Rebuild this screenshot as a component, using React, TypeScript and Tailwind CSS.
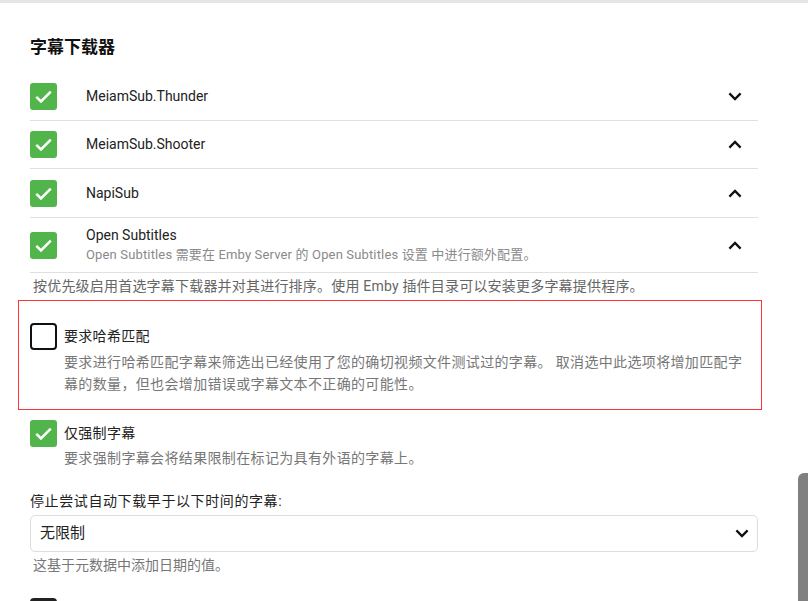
import React from 'react'

const FONT = "font-['Roboto','Noto_Sans_CJK_SC',sans-serif]"

function GreenCheck() {
  return (
    <div className="flex h-[27px] w-[27px] shrink-0 items-center justify-center rounded-[3px] bg-[#52b54b]">
      <svg width="27" height="27" viewBox="0 0 27 27">
        <path d="M6.3 13.8 L11 18.5 L20.8 8.7" fill="none" stroke="#fff" strokeWidth="2.5" />
      </svg>
    </div>
  )
}

function Chevron({ up = false }: { up?: boolean }) {
  return (
    <svg width="14" height="9" viewBox="0 0 14 9" className={up ? 'rotate-180' : ''}>
      <path d="M1.4 1.4 L7 7 L12.6 1.4" fill="none" stroke="#111" strokeWidth="2.3" />
    </svg>
  )
}

const downloaders = [
  { name: 'MeiamSub.Thunder', up: false },
  { name: 'MeiamSub.Shooter', up: true },
  { name: 'NapiSub', up: true },
]

export default function App() {
  return (
    <div className={`relative h-[601px] w-[808px] overflow-hidden bg-white text-[#222] ${FONT}`}>
      <div className="h-[3px] bg-[#e5e5e5]" />

      <div className="pl-[30px] pr-[50px]">
        <h2 className="mt-[32px] text-[17px] font-bold leading-[24px] text-[#111]">字幕下载器</h2>

        {/* Downloader list */}
        <div className="mt-[14px]">
          {downloaders.map((d, i) => (
            <div
              key={d.name}
              className={`flex items-center border-b border-[#e0e0e0] ${i === 2 ? 'h-[49px]' : 'h-[48px]'}`}
            >
              <GreenCheck />
              <div className="ml-[29px] flex-1 text-[14px]">{d.name}</div>
              <div className="mr-[16px] flex w-[14px] justify-center">
                <Chevron up={d.up} />
              </div>
            </div>
          ))}
          <div className="flex h-[55px] items-center border-b border-[#e0e0e0]">
            <GreenCheck />
            <div className="ml-[29px] flex-1">
              <div className="text-[14px] leading-[20px]">Open Subtitles</div>
              <div className="text-[13px] leading-[20px] tracking-[0.15px] text-[#8a8a8a]">
                Open Subtitles 需要在 Emby Server 的 Open Subtitles 设置 中进行额外配置。
              </div>
            </div>
            <div className="mr-[16px] flex w-[14px] justify-center">
              <Chevron up />
            </div>
          </div>
        </div>

        <div className="ml-[3px] mt-[3px] text-[14px] leading-[20px] tracking-[0.2px] text-[#666]">
          按优先级启用首选字幕下载器并对其进行排序。使用 Emby 插件目录可以安装更多字幕提供程序。
        </div>

        {/* Hash match option (highlighted) */}
        <div className="ml-[-12px] mr-[-4px] mt-[4px] border border-[#f33] pb-[14px] pl-[11px] pr-[13px] pt-[22px]">
          <div className="flex h-[27px] items-center">
            <div className="h-[27px] w-[27px] shrink-0 rounded-[4px] border-2 border-[#111]" />
            <div className="ml-[7px] text-[14px] tracking-[0.3px]">要求哈希匹配</div>
          </div>
          <div className="mt-[1px] pl-[34px] text-[14px] leading-[22px] tracking-[0.35px] text-[#777]">
            要求进行哈希匹配字幕来筛选出已经使用了您的确切视频文件测试过的字幕。 取消选中此选项将增加匹配字幕的数量，但也会增加错误或字幕文本不正确的可能性。
          </div>
        </div>

        {/* Forced only */}
        <div className="mt-[10px] flex h-[27px] items-center">
          <GreenCheck />
          <div className="ml-[7px] text-[14px] tracking-[0.3px]">仅强制字幕</div>
        </div>
        <div className="pl-[34px] text-[14px] leading-[22px] tracking-[0.35px] text-[#777]">
          要求强制字幕会将结果限制在标记为具有外语的字幕上。
        </div>

        {/* Age limit select */}
        <div className="mt-[22px] text-[14px] leading-[20px] tracking-[0.6px]">停止尝试自动下载早于以下时间的字幕:</div>
        <div className="mt-[4px] flex h-[37px] items-center rounded-[5px] border border-[#ddd] pl-[9px] pr-[8px]">
          <div className="flex-1 text-[15px]">无限制</div>
          <Chevron />
        </div>
        <div className="ml-[3px] mt-[3px] text-[14px] leading-[20px] text-[#777]">这基于元数据中添加日期的值。</div>

        <div className="mt-[23px] h-[27px] w-[27px] rounded-[4px] bg-[#222]" />
      </div>

      {/* Scrollbar thumb */}
      <div className="absolute left-[798px] top-[473px] h-[128px] w-[10px] rounded-tl-[6px] bg-[#808080]" />
    </div>
  )
}
